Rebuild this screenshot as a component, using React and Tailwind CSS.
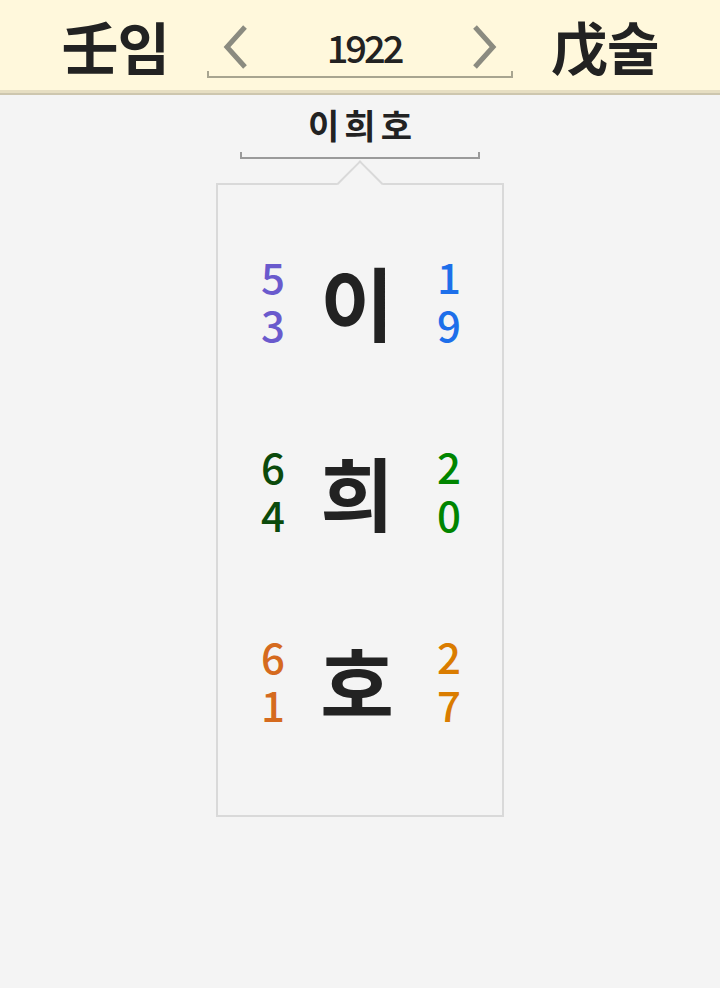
const KR = { fontFamily: '"Noto Sans CJK KR", "Noto Sans", sans-serif' };

const rows = [
  { ch: "이", left: "5\n3", right: "1\n9", lc: "text-[#6a5acd]", rc: "text-[#1d6fea]" },
  { ch: "희", left: "6\n4", right: "2\n0", lc: "text-[#0b4a0b]", rc: "text-[#008500]" },
  { ch: "호", left: "6\n1", right: "2\n7", lc: "text-[#d56a1e]", rc: "text-[#da7c00]" },
];

function Chevron({ dir }) {
  // left or right pointing arrow, drawn as a thick polyline
  const pts = dir === "left" ? "22,3 4,23 22,43" : "4,3 22,23 4,43";
  return (
    <svg width="26" height="46" viewBox="0 0 26 46" className="shrink-0">
      <polyline points={pts} fill="none" stroke="#8b8b80" strokeWidth="5" strokeLinejoin="miter" />
    </svg>
  );
}

function Digits({ text, color }) {
  // two stacked digits in one text run
  return (
    <div className={"whitespace-pre-line text-center text-[42px] leading-[48px] font-medium " + color}>
      {text}
    </div>
  );
}

export default function App() {
  return (
    <div className="min-h-screen bg-[#f4f4f4] text-[#222]" style={KR}>
      {/* Header */}
      <header className="h-[93px] bg-[#fff8dc] border-b-[3px] border-[#e6dec2] shadow-[0_2px_0_#cdc6ae] flex items-center justify-center gap-[38px]">
        <div className="text-[57px] font-bold leading-none tracking-[-1px]">壬임</div>
        <nav className="flex flex-col mt-[10px]">
          <div className="w-[306px] flex items-center justify-between px-[16px] h-[48px]">
            <Chevron dir="left" />
            <div className="text-[38px] leading-none font-medium tracking-[-3px] ml-[8px]">1922</div>
            <Chevron dir="right" />
          </div>
          <div className="w-[306px] h-[7px] border-x-2 border-b-2 border-[#a8a590]" />
        </nav>
        <div className="text-[57px] font-bold leading-none tracking-[-1px]">戊술</div>
      </header>

      {/* Name */}
      <main className="flex flex-col items-center pt-[12px]">
        <div className="text-[34px] font-bold leading-[40px] tracking-[5px] pl-[5px]">이희호</div>
        <div className="w-[240px] h-[7px] mt-[7px] border-x-2 border-b-2 border-[#9a9a9a]" />

        {/* Card */}
        <div className="relative mt-[24px] w-[288px] border-2 border-[#d9d9d9] pt-[20px] pb-[40px]">
          <div className="absolute left-1/2 -translate-x-1/2 top-[-18px] w-[33px] h-[33px] rotate-45 border-l-2 border-t-2 border-[#d9d9d9] bg-[#f4f4f4]" />
          {rows.map((r) => (
            <div key={r.ch} className="h-[190px] flex items-center pl-[15px]">
              <div className="w-[80px] flex justify-center">
                <Digits text={r.left} color={r.lc} />
              </div>
              <div className="w-[88px] flex justify-center text-[80px] font-bold leading-none">{r.ch}</div>
              <div className="w-[96px] flex justify-center">
                <Digits text={r.right} color={r.rc} />
              </div>
            </div>
          ))}
        </div>
      </main>
    </div>
  );
}
